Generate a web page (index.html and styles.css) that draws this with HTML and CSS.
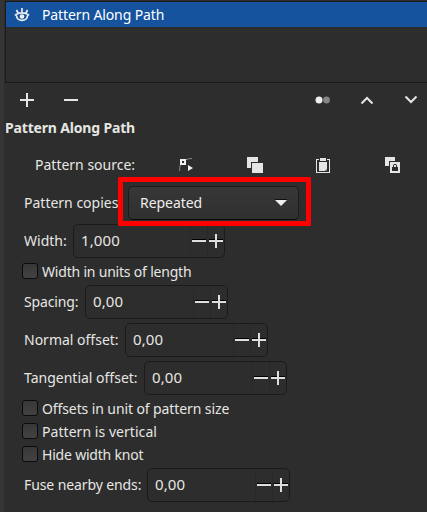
FILE: index.html
```html
<!DOCTYPE html>
<html lang="en">
<head>
<meta charset="utf-8">
<title>Path Effects</title>
<link rel="stylesheet" href="styles.css">
</head>
<body>
<main class="panel">
  <section class="list">
    <div class="effect">
      <svg class="eye" width="16" height="16" viewBox="0 0 16 16" fill="none" stroke="#eee" stroke-width="1.7"><path d="M1 8.500C4 5 12 5 15 8.500M2.500 8.500C2.500 15 13.500 15 13.500 8.500M8 1v5M2.500 3L4 6M13.500 3L12 6"/><circle cx="8" cy="9.500" r="1.500" fill="#eee"/></svg>
      <span>Pattern Along Path</span>
    </div>
  </section>
  <div class="toolbar">
    <svg width="44" height="34" fill="#e5e5e5"><path d="M15 16h14v2H15zM21 10h2v14h-2z"/></svg>
    <svg width="44" height="34" fill="#e5e5e5"><path d="M15 16h14v2H15z"/></svg>
    <svg class="dots" width="44" height="34"><circle cx="25.500" cy="17" r="3.400" fill="#858585"/><circle cx="18" cy="17" r="3.500" fill="#eee"/></svg>
    <svg width="44" height="34" fill="none" stroke="#e5e5e5" stroke-width="2"><path d="M16.500 20.500L22 15l5.500 5.500"/></svg>
    <svg width="44" height="34" fill="none" stroke="#e5e5e5" stroke-width="2"><path d="M16.500 13.500L22 19l5.500-5.500"/></svg>
  </div>
  <h1 class="title">Pattern Along Path</h1>
  <div class="source">
    <span class="source-label">Pattern source:</span>
    <svg width="16" height="16" viewBox="0 0 16 16"><path d="M1.500 14Q1.500 9 3 6M7 3Q10 1.500 14 1.500" fill="none" stroke="#858585"/><path fill="#eee" fill-rule="evenodd" d="M2 2h6v6H2zM4 4v2h2V4zM10 8l5 3-5 3z"/></svg>
    <svg width="16" height="16" viewBox="0 0 16 16" fill="#e5e5e5"><path d="M0 0h11v5H4v6H0zM5 6h11v10H5z"/></svg>
    <svg width="16" height="16" viewBox="0 0 16 16" fill="#e5e5e5"><path fill-rule="evenodd" d="M0 2h3v1H1v12h12V3h-2V2h3v14H0zM4 1h6v3H4zM3 5h8v7l-2 2H3z"/><path d="M10 13h1v1h-1z" fill="#777"/></svg>
    <svg width="16" height="16" viewBox="0 0 16 16"><path fill="#e5e5e5" d="M0 0h10v4H4v5H0zM5 5h10v11H5z"/><path fill="#2d2d2d" d="M7 10h6v4H7z"/><path d="M8.500 10V8q1.500-1.500 3 0v2" fill="none" stroke="#2d2d2d"/></svg>
  </div>
  <div class="row copies"><span class="label">Pattern copies:</span>
    <div class="highlight"><button class="combo"><span>Repeated</span><svg width="12" height="8"><path d="M0 0h12v1H0z" fill="#111"/><path d="M0 1h12L6 7z" fill="#eee"/></svg></button></div>
  </div>
  <div class="row width"><span class="label">Width:</span><div class="spin"><span>1,000</span><i class="step minus"></i><i class="step plus"></i></div></div>
  <label class="check units"><i class="box"></i><span>Width in units of length</span></label>
  <div class="row spacing"><span class="label">Spacing:</span><div class="spin"><span>0,00</span><i class="step minus"></i><i class="step plus"></i></div></div>
  <div class="row normal"><span class="label">Normal offset:</span><div class="spin"><span>0,00</span><i class="step minus"></i><i class="step plus"></i></div></div>
  <div class="row tangential"><span class="label">Tangential offset:</span><div class="spin"><span>0,00</span><i class="step minus"></i><i class="step plus"></i></div></div>
  <label class="check offsets"><i class="box"></i><span>Offsets in unit of pattern size</span></label>
  <label class="check vertical"><i class="box"></i><span>Pattern is vertical</span></label>
  <label class="check knot"><i class="box"></i><span>Hide width knot</span></label>
  <div class="row fuse"><span class="label">Fuse nearby ends:</span><div class="spin"><span>0,00</span><i class="step minus"></i><i class="step plus"></i></div></div>
</main>
</body>
</html>
```
FILE: styles.css
```css
* { box-sizing: border-box; }
body { margin: 0; background: #2d2d2d; color: #e6e6e3; font: 14px/20px "Noto Sans", sans-serif; overflow: hidden; }
svg { display: block; flex: none; }
span { white-space: nowrap; }
.panel { height: 512px; padding: 1px 0 0 1px; border-left: 4px solid #353535; display: flex; flex-direction: column; }
.panel > * { flex: none; }
.list { height: 82px; border: 1px solid #1b1b1b; border-right: 0; }
.effect { height: 25px; display: flex; align-items: center; padding-left: 8px; background: #15539e; color: #fff; letter-spacing: -0.12px; }
.effect span { margin-left: 12px; }
.toolbar { height: 34px; display: flex; }
.dots { margin-left: 208px; }
.title { margin: 0; height: 22px; font-size: 14px; line-height: 22px; font-weight: 700; letter-spacing: -0.17px; }
.source { height: 47px; display: flex; align-items: center; padding: 5px 0 0 30px; gap: 53px; }
.source-label { width: 90px; }
.row { height: 34px; display: flex; align-items: center; padding-left: 19px; margin-bottom: 4px; }
.label { flex: none; }
.copies .label { width: 94px; }
.highlight { position: relative; z-index: 1; width: 193px; height: 49px; margin-top: -3px; padding: 4px 5px; border: 5px solid #f00; border-radius: 1px; background: #2d2d2d; }
.combo { width: 171px; height: 34px; display: flex; align-items: center; justify-content: space-between; padding: 0 11px; border: 1px solid #1b1b1b; border-bottom-color: #080808; border-radius: 5px; background: linear-gradient(#373737, #303030); color: #eee; font: inherit; letter-spacing: -0.05px; }
.spin { width: 143px; height: 34px; display: flex; border: 1px solid #1b1b1b; border-radius: 5px; }
.spin span { flex: 1; padding-left: 7px; line-height: 30px; font-size: 15px; letter-spacing: 0.1px; }
.width .label { width: 49px; }
.width .spin { width: 152px; }
.spacing .label { width: 61px; letter-spacing: -0.15px; }
.normal .label { width: 101px; }
.tangential .label { width: 120px; }
.fuse .label { width: 123px; letter-spacing: -0.1px; }
.step { width: 17px; height: 32px; border-left: 1px solid #282828; background: linear-gradient(#dedede, #dedede) 1px 16px / 14px 2px no-repeat, linear-gradient(#000, #000) 1px 15px / 14px 1px no-repeat; }
.plus { background: linear-gradient(#dedede, #dedede) 7px 10px / 2px 14px no-repeat, linear-gradient(#dedede, #dedede) 1px 16px / 14px 2px no-repeat, linear-gradient(#000, #000) 1px 15px / 14px 1px no-repeat; }
.minus, .plus { background-position-y: 15px, 14px; }
.plus { background-position-y: 9px, 15px, 14px; }
.check { height: 23px; display: flex; align-items: flex-start; padding: 1px 0 0 17px; line-height: 18px; }
.units { letter-spacing: -0.2px; }
.offsets { letter-spacing: -0.1px; }
.vertical { letter-spacing: 0.05px; }
.knot { letter-spacing: -0.2px; }
.box { width: 16px; height: 16px; margin-right: 4px; border: 1px solid #0b0b0b; border-radius: 3px; background: linear-gradient(#383838, #424242); }
```
